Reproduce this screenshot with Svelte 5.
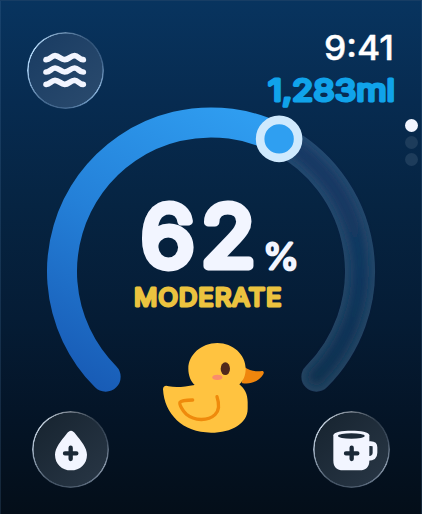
<script>
  const time = '9:41';
  const amount = '1,283ml';
  const level = 62;
  const status = 'MODERATE';
  const pages = [0, 1, 2];
  let page = $state(0);

  // gauge geometry: 270° sweep, angles measured clockwise from 12 o'clock
  const cx = 166;
  const cy = 166.4;
  const r = 149;
  const knobAngle = 27.2;

  function point(deg) {
    const a = (deg * Math.PI) / 180;
    return [cx + r * Math.sin(a), cy - r * Math.cos(a)];
  }

  function arc(from, to) {
    const large = to - from > 180 ? 1 : 0;
    return `M${point(from).join(' ')} A${r} ${r} 0 ${large} 1 ${point(to).join(' ')}`;
  }

  const knob = point(knobAngle);
</script>

{#snippet plus(x, y)}
  <path d="M{x - 17} {y}H{x + 17}M{x} {y - 17}V{y + 17}" stroke="#1b2937" stroke-width="13" stroke-linecap="round" />
{/snippet}

<main class="face">
  <svg class="gauge" viewBox="0 0 332 290" width="332" height="290" fill="none" aria-hidden="true">
    <defs>
      <linearGradient id="fill" gradientUnits="userSpaceOnUse" x1="200" y1="10" x2="50" y2="285">
        <stop offset="0" stop-color="#2f9df0" />
        <stop offset="0.5" stop-color="#2480d8" />
        <stop offset="1" stop-color="#185bb5" />
      </linearGradient>
      <linearGradient id="edge" gradientUnits="userSpaceOnUse" x1="0" y1="30" x2="0" y2="290">
        <stop offset="0" stop-color="#264a71" />
        <stop offset="1" stop-color="#24425f" />
      </linearGradient>
      <linearGradient id="core" gradientUnits="userSpaceOnUse" x1="0" y1="30" x2="0" y2="290">
        <stop offset="0" stop-color="#143a66" />
        <stop offset="0.5" stop-color="#11375f" />
        <stop offset="1" stop-color="#0e2f4e" />
      </linearGradient>
      <filter id="soft" filterUnits="userSpaceOnUse" x="0" y="0" width="332" height="290">
        <feGaussianBlur stdDeviation="4" />
      </filter>
    </defs>
    <path d={arc(knobAngle, 135)} stroke="url(#edge)" stroke-width="30" stroke-linecap="round" />
    <path d={arc(knobAngle, 135)} stroke="url(#core)" stroke-width="17" stroke-linecap="round" filter="url(#soft)" />
    <path d={arc(-135, knobAngle)} stroke="url(#fill)" stroke-width="30" stroke-linecap="round" />
    <circle cx={knob[0]} cy={knob[1]} r="19" fill="#2f9ff1" stroke="#cfe9fd" stroke-width="8.6" />
  </svg>

  <header class="top">
    <button class="glass" aria-label="Waves">
      <svg viewBox="0 0 228 228" width="76" height="76" fill="none">
        {#each [83, 120, 157] as y}
          <path
            d="M57 {y}C69 {y + 1} 73 {y - 12} 84 {y - 12}C97 {y - 12} 101 {y} 113 {y}C126 {y} 130 {y - 12} 143 {y - 12}C154 {y - 12} 157 {y + 1} 169 {y}"
            stroke="#f2f5ff"
            stroke-width="17"
            stroke-linecap="round"
          />
        {/each}
      </svg>
    </button>
    <div class="info">
      <svg class="time" width="90" height="36" role="img">
        <text x="18" y="28" textLength="70" lengthAdjust="spacingAndGlyphs">{time}</text>
      </svg>
      <svg class="amount" width="140" height="40" role="img">
        <text x="12" y="33" textLength="127" lengthAdjust="spacingAndGlyphs">{amount}</text>
      </svg>
    </div>
  </header>

  <nav class="pager">
    {#each pages as p}
      <button class="dot" class:active={p === page} aria-label="Page {p + 1}" onclick={() => (page = p)}></button>
    {/each}
  </nav>

  <section class="readout">
    <svg width="180" height="100" role="img">
      <text class="value" x="10" y="79.5" textLength="121" lengthAdjust="spacingAndGlyphs">{level}</text>
      <text class="percent" x="132" y="82.5" textLength="36" lengthAdjust="spacingAndGlyphs">%</text>
    </svg>
    <svg width="180" height="28" role="img">
      <text class="status" x="3" y="20" textLength="148.5" lengthAdjust="spacingAndGlyphs">{status}</text>
    </svg>
    <svg class="duck" viewBox="36 36 312 276" width="104" height="92" fill="none" aria-hidden="true">
      <path d="M284 112C299 122 316 126 336 123C342 123 343 128 339 134C327 152 302 166 275 159Z" fill="#f0860d" />
      <path
        d="M202 39C249 39 287 74 287 116C287 136 280 152 268 163C284 176 293 193 293 216V236C293 280 245 308 183 308C98 308 43 252 39 178C39 168 47 165 56 169C80 174 105 170 134 165C122 153 115 136 115 116C115 74 154 39 202 39Z"
        fill="#ffc340"
      />
      <path d="M128 210C111 210 93 213 90 217C87 222 98 243 109 253C133 273 174 274 195 254C207 242 208 221 201 200" stroke="#ef8a0c" stroke-width="10" stroke-linecap="round" stroke-linejoin="round" />
      <ellipse cx="226" cy="116" rx="14" ry="19" fill="#51291b" />
      <ellipse cx="202" cy="142" rx="15" ry="8" fill="#fa8d6c" />
    </svg>
  </section>

  <footer class="bottom">
    <button class="glass dark" aria-label="Add water">
      <svg viewBox="0 0 228 228" width="76" height="76" fill="none">
        <path d="M114 56C109 56 105 60 101 65C84 86 66 107 66 128C66 156 87 175 114 175C141 175 162 156 162 128C162 107 144 86 127 65C123 60 119 56 114 56Z" fill="#f2f5ff" />
        {@render plus(113, 124)}
      </svg>
    </button>
    <button class="glass dark" aria-label="Add drink">
      <svg viewBox="0 0 228 228" width="76" height="76" fill="none">
        <path d="M162 95H170C182 95 183 100 183 106V122C183 136 174 139 162 139" stroke="#f2f5ff" stroke-width="14" stroke-linejoin="round" />
        <path d="M58 70C58 60 84 56 112 56C140 56 166 60 166 70V146C166 165 155 175 137 175H87C69 175 58 165 58 146Z" fill="#f2f5ff" />
        <ellipse cx="112" cy="72" rx="40" ry="8" fill="#1b2937" />
        {@render plus(113, 124)}
      </svg>
    </button>
  </footer>
</main>

<style>
  :global(body) {
    margin: 0;
    background: #04101d;
  }

  .face {
    display: grid;
    box-sizing: border-box;
    width: 422px;
    height: 514px;
    overflow: hidden;
    background: linear-gradient(180deg, #08345f 0%, #072b50 20%, #062442 40%, #051c35 62%, #041426 82%, #040e19 100%);
    box-shadow: inset 0 1px 0 #173d64, inset 1px 0 0 rgba(70, 110, 150, 0.25), inset -1px 0 0 rgba(70, 110, 150, 0.25);
    font-family: Inter, 'Liberation Sans', sans-serif;
  }

  /* layers share one cell */
  .face > * {
    grid-area: 1 / 1;
  }

  .gauge {
    margin: 105px 0 0 45px;
  }

  .top {
    align-self: start;
    display: flex;
    justify-content: space-between;
    padding: 31.5px 26px 0 26.5px;
  }

  .info {
    display: flex;
    flex-direction: column;
    align-items: flex-end;
  }

  svg {
    display: block;
    overflow: visible;
  }

  text {
    stroke-linejoin: round;
  }

  .time text {
    fill: #fff;
    stroke: #fff;
    stroke-width: 0.4px;
    font-size: 33.5px;
    font-weight: 500;
  }

  .amount text {
    fill: #10a3ea;
    stroke: #10a3ea;
    stroke-width: 3px;
    font-size: 30px;
    font-weight: 400;
  }

  .pager {
    align-self: start;
    justify-self: end;
    display: flex;
    flex-direction: column;
    gap: 4px;
    padding: 119px 4px 0 0;
  }

  .dot {
    width: 13px;
    height: 13px;
    padding: 0;
    border: 0;
    border-radius: 50%;
    background: #1d3c5b;
  }

  .dot.active {
    background: #f2f5ff;
  }

  .readout {
    align-self: start;
    justify-self: start;
    display: flex;
    flex-direction: column;
    padding: 186px 0 0 131px;
  }

  .value,
  .percent {
    fill: #f2f5ff;
    stroke: #f2f5ff;
  }

  .value {
    font-size: 83px;
    font-weight: 350;
    letter-spacing: 6px;
    stroke-width: 8.8px;
  }

  .percent {
    font-size: 36px;
    font-weight: 300;
    stroke-width: 2.8px;
  }

  .status {
    fill: #ebc33f;
    stroke: #ebc33f;
    stroke-width: 2.8px;
    font-size: 24.5px;
    font-weight: 400;
    letter-spacing: 0.8px;
  }

  .duck {
    margin: 28px 0 0 31px;
  }

  .bottom {
    align-self: end;
    display: flex;
    justify-content: space-between;
    padding: 0 32px 26px;
  }

  .glass {
    position: relative;
    width: 77px;
    height: 77px;
    padding: 0.5px;
    border: 0;
    border-radius: 50%;
    background: linear-gradient(135deg, #183b62, #2b4b6e);
  }

  .glass.dark {
    background: linear-gradient(135deg, #16232f, #293746);
  }

  /* glass rim, bright at the upper left and lower right */
  .glass::before {
    content: '';
    position: absolute;
    inset: 0;
    border-radius: 50%;
    background: conic-gradient(from 0deg, #6488ab, #2f5277 40deg, #3c6189 75deg, #8db5dc 120deg, #6b94bd 145deg, #41658c 180deg, #45698f 215deg, #a5cdf2 270deg, #b4dafa 305deg, #6488ab);
    mask: radial-gradient(circle, transparent 36.6px, #000 37.2px);
  }

  .glass.dark::before {
    background: conic-gradient(from 0deg, #77818d, #2c3a49 40deg, #3c4b5d 75deg, #8998aa 115deg, #657487 145deg, #455465 180deg, #455465 215deg, #a6b6c8 270deg, #c4d2e0 310deg, #77818d);
  }
</style>
